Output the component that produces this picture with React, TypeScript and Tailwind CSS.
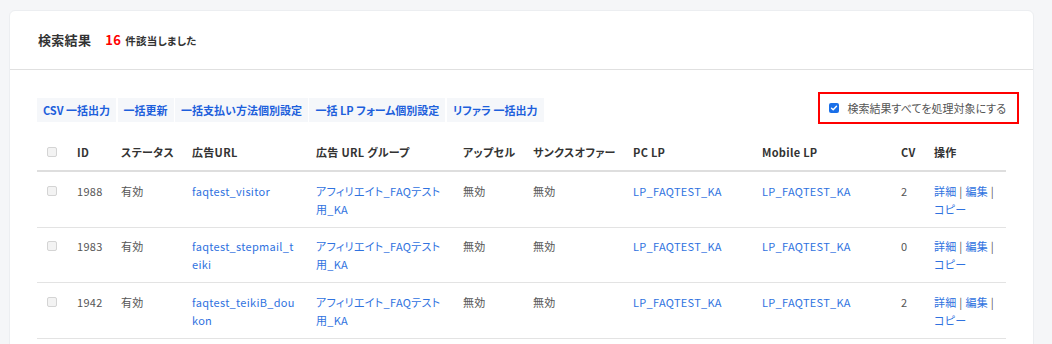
import React from "react";

const font = { fontFamily: '"Noto Sans CJK JP", "Noto Sans", sans-serif' };

type Row = {
  id: string;
  status: string;
  url: string;
  group: string;
  upsell: string;
  thanks: string;
  pc: string;
  mobile: string;
  cv: string;
};

const rows: Row[] = [
  { id: "1988", status: "有効", url: "faqtest_visitor", group: "アフィリエイト_FAQテスト用_KA", upsell: "無効", thanks: "無効", pc: "LP_FAQTEST_KA", mobile: "LP_FAQTEST_KA", cv: "2" },
  { id: "1983", status: "有効", url: "faqtest_stepmail_teiki", group: "アフィリエイト_FAQテスト用_KA", upsell: "無効", thanks: "無効", pc: "LP_FAQTEST_KA", mobile: "LP_FAQTEST_KA", cv: "0" },
  { id: "1942", status: "有効", url: "faqtest_teikiB_doukon", group: "アフィリエイト_FAQテスト用_KA", upsell: "無効", thanks: "無効", pc: "LP_FAQTEST_KA", mobile: "LP_FAQTEST_KA", cv: "2" },
];

function Box() {
  return (
    <span className="block w-[10px] h-[10px] rounded-[2px] border border-[#d4d4d4] bg-[#f3f3f3]" />
  );
}

function CheckedBox() {
  return (
    <span className="flex items-center justify-center w-[10px] h-[10px] rounded-[2px] bg-[#1a6fe8]">
      <svg width="8" height="8" viewBox="0 0 8 8" fill="none">
        <path d="M1.5 4.2 L3.2 5.8 L6.5 2.2" stroke="white" strokeWidth="1.4" strokeLinecap="round" strokeLinejoin="round" />
      </svg>
    </span>
  );
}

const buttons = ["CSV 一括出力", "一括更新", "一括支払い方法個別設定", "一括 LP フォーム個別設定", "リファラ 一括出力"];

export default function App() {
  const th = "text-left align-top px-[10px] pt-[10px] pb-[9px] leading-[18px] font-bold text-[#333] text-[11px] whitespace-nowrap";
  const td = "text-left align-top px-[10px] pt-[9.5px] pb-[9px] leading-[18px] text-[11px]";
  return (
    <div className="w-[1052px] h-[344px] overflow-hidden bg-[#f5f6f8] pt-[10px] pl-[9px] [font-feature-settings:'palt'] tracking-[0.3px]" style={font}>
      <div className="w-[1025px] h-[400px] bg-white rounded-[6px] border border-[#eceef1]">
        <div className="px-[28px] pt-[19px] pb-[18px] flex items-baseline leading-[20px] border-b border-[#e0e0e0]">
          <span className="text-[13px] font-bold text-[#333]">検索結果</span>
          <span className="ml-[14px] text-[13px] font-bold text-[#ff0000]">16</span>
          <span className="ml-[4px] text-[10.5px] font-bold text-[#333]">件該当しました</span>
        </div>
        <div className="px-[27px] pt-[28px]">
          <div className="flex justify-between items-start">
            <div className="flex gap-[1.5px] tracking-normal">
              {buttons.map((b) => (
                <span key={b} className="h-[24px] px-[6px] flex items-center bg-[#f5f7fa] text-[11px] font-bold text-[#1d5fdc] whitespace-nowrap">
                  {b}
                </span>
              ))}
            </div>
            <div className="relative mt-[1px] flex items-center gap-[8px] leading-[18px] tracking-normal">
              <CheckedBox />
              <span className="text-[11px] text-[#555]">検索結果すべてを処理対象にする</span>
              <span className="absolute -top-[7px] -bottom-[7px] -left-[11px] -right-[13px] border-2 border-[#ff0000]" />
            </div>
          </div>
          <table className="mt-[11px] w-[969px] table-fixed border-collapse">
            <colgroup>
              <col className="w-[30px]" />
              <col className="w-[44px]" />
              <col className="w-[71px]" />
              <col className="w-[124px]" />
              <col className="w-[147px]" />
              <col className="w-[70px]" />
              <col className="w-[100px]" />
              <col className="w-[129px]" />
              <col className="w-[139px]" />
              <col className="w-[33px]" />
              <col className="w-[82px]" />
            </colgroup>
            <thead>
              <tr className="border-b-2 border-[#dedede]">
                <th className={th}>
                  <div className="h-[18px] flex items-center"><Box /></div>
                </th>
                <th className={th}>ID</th>
                <th className={th}>ステータス</th>
                <th className={th}>広告URL</th>
                <th className={th}>広告 URL グループ</th>
                <th className={th}>アップセル</th>
                <th className={th}>サンクスオファー</th>
                <th className={th}>PC LP</th>
                <th className={th}>Mobile LP</th>
                <th className={th}>CV</th>
                <th className={th}>操作</th>
              </tr>
            </thead>
            <tbody>
              {rows.map((r) => (
                <tr key={r.id} className="border-b border-[#e3e3e3]">
                  <td className={td}>
                    <div className="h-[18px] flex items-center"><Box /></div>
                  </td>
                  <td className={`${td} text-[#555]`}>{r.id}</td>
                  <td className={`${td} text-[#555]`}>{r.status}</td>
                  <td className={`${td} text-[#2f72e0] break-all`}>{r.url}</td>
                  <td className={`${td} text-[#2f72e0] break-all`}>{r.group}</td>
                  <td className={`${td} text-[#555]`}>{r.upsell}</td>
                  <td className={`${td} text-[#555]`}>{r.thanks}</td>
                  <td className={`${td} text-[#2f72e0]`}>{r.pc}</td>
                  <td className={`${td} text-[#2f72e0]`}>{r.mobile}</td>
                  <td className={`${td} text-[#555]`}>{r.cv}</td>
                  <td className={`${td} text-[#555]`}>
                    <span className="text-[#2f72e0]">詳細</span> | <span className="text-[#2f72e0]">編集</span> | <span className="text-[#2f72e0]">コピー</span>
                  </td>
                </tr>
              ))}
            </tbody>
          </table>
        </div>
      </div>
    </div>
  );
}
